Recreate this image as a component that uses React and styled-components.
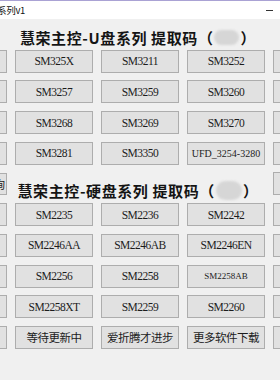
import styled, { createGlobalStyle } from 'styled-components';

const sections = [
    {
        title: '慧荣主控-U盘系列',
        blob: 'small',
        rows: [
            ['SM325X', 'SM3211', 'SM3252'],
            ['SM3257', 'SM3259', 'SM3260'],
            ['SM3268', 'SM3269', 'SM3270'],
            ['SM3281', 'SM3350', 'UFD_3254-3280'],
        ],
    },
    {
        title: '慧荣主控-硬盘系列',
        blob: 'big',
        side: true,
        rows: [
            ['SM2235', 'SM2236', 'SM2242'],
            ['SM2246AA', 'SM2246AB', 'SM2246EN'],
            ['SM2256', 'SM2258', 'SM2258AB'],
            ['SM2258XT', 'SM2259', 'SM2260'],
            ['等待更新中', '爱折腾才进步', '更多软件下载'],
        ],
    },
];

// labels that were squeezed smaller in the original window
const small = { 'UFD_3254-3280': '10px', SM2258AB: '9px' };

function App() {
    return (
        <Window>
            <GlobalStyle />
            <TitleBar>
                <Caption>系列v1</Caption>
                <Minimize />
            </TitleBar>
            <Grid>
                {sections.map((sec) => (
                    <Section key={sec.title} sec={sec} />
                ))}
            </Grid>
        </Window>
    );
}

function Section({ sec }) {
    return (
        <>
            {sec.side ? <SideButton>查询</SideButton> : <span />}
            <Heading $tall={sec.side}>
                {sec.title} 提取码（<Blob $big={sec.blob === 'big'} />）
            </Heading>
            {sec.side ? <Button /> : <span />}
            {sec.rows.map((row, i) => (
                <Row key={i} cells={row} />
            ))}
        </>
    );
}

function Row({ cells }) {
    return (
        <>
            <Button />
            {cells.map((c) => (
                <Button key={c} $size={small[c]}>
                    {c}
                </Button>
            ))}
            <Button />
        </>
    );
}

export default App;

const GlobalStyle = createGlobalStyle`
    html, body {
        margin: 0;
        padding: 0;
        width: 280px;
        height: 380px;
        overflow: hidden;
        background: #f0f0f0;
    }
`;

const Window = styled.div`
    width: 280px;
    height: 380px;
    overflow: hidden;
    background: #f0f0f0;
`;

const TitleBar = styled.div`
    height: 18px;
    background: #ffffff;
    border-top: 1px solid #aaa2d4;
    display: flex;
    align-items: center;
    justify-content: space-between;
`;

const Caption = styled.div`
    margin-left: -3px;
    font-family: "Noto Sans CJK SC", sans-serif;
    font-size: 9.5px;
    color: #111;
    letter-spacing: -0.3px;
`;

const Minimize = styled.div`
    width: 7px;
    height: 1px;
    background: #333;
    margin-right: 7px;
`;

const Grid = styled.div`
    display: grid;
    grid-template-columns: repeat(5, 78px);
    column-gap: 8px;
    row-gap: 7.7px;
    margin-left: -71px;
    grid-auto-rows: 23px;
`;

const Heading = styled.div`
    grid-column: 2 / 5;
    height: ${(p) => (p.$tall ? '35.6px' : '30.6px')};
    padding-top: ${(p) => (p.$tall ? '0' : '6px')};
    box-sizing: border-box;
    display: flex;
    align-items: center;
    justify-content: center;
    font-family: "Noto Sans CJK SC", sans-serif;
    font-weight: 700;
    font-size: 15px;
    letter-spacing: 0.6px;
    color: #141414;
    white-space: nowrap;
    margin-left: -4px;
`;

const Blob = styled.span`
    display: inline-block;
    width: ${(p) => (p.$big ? '26px' : '25px')};
    height: ${(p) => (p.$big ? '19px' : '15px')};
    border-radius: 10px;
    background: #d6d6d6;
    filter: blur(1.2px);
    margin: 0 1px;
`;

const Button = styled.div`
    height: 23px;
    box-sizing: border-box;
    background: #e1e1e1;
    border: 1px solid #adadad;
    display: flex;
    align-items: center;
    justify-content: center;
    font-family: "Liberation Serif", "Noto Sans CJK SC", serif;
    font-size: ${(p) => p.$size || '11.5px'};
    letter-spacing: ${(p) => (p.$size ? '0' : '-0.5px')};
    color: #1c1c1c;
    white-space: nowrap;
    overflow: hidden;
    align-self: center;
`;

const SideButton = styled(Button)`
    height: 22px;
    justify-content: flex-end;
    padding-right: 1px;
    font-family: "Noto Sans CJK SC", sans-serif;
    font-size: 11px;
    letter-spacing: 0;
`;
